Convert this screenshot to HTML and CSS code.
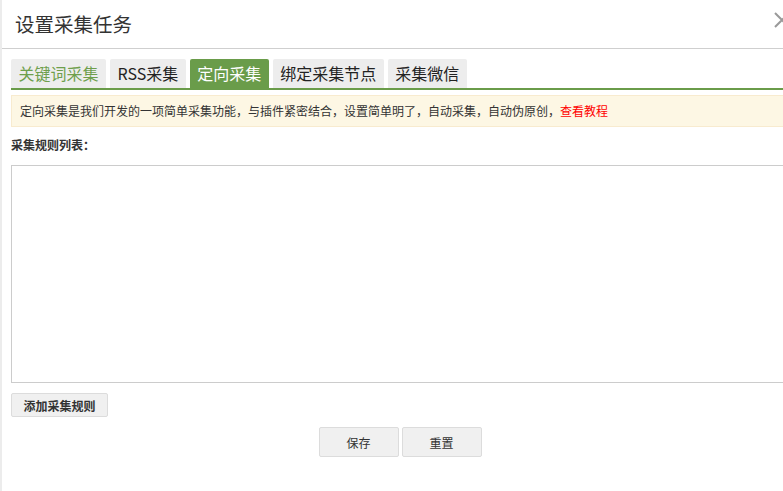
FILE: index.html
```html
<!DOCTYPE html>
<html lang="zh-CN">
<head>
<meta charset="utf-8">
<title>设置采集任务</title>
<link rel="stylesheet" href="styles.css">
</head>
<body>
<div class="dialog">
  <div class="header">
    <h1 class="title">设置采集任务</h1>
    <span class="close">
      <svg width="18" height="18" viewBox="0 0 18 18"><path d="M2 2 L16 16 M16 2 L2 16" stroke="#9a9a9a" stroke-width="2" fill="none"/></svg>
    </span>
  </div>
  <div class="content">
    <div class="tabs">
      <span class="tab tab-first">关键词采集</span>
      <span class="tab">RSS采集</span>
      <span class="tab active">定向采集</span>
      <span class="tab">绑定采集节点</span>
      <span class="tab">采集微信</span>
    </div>
    <div class="notice">定向采集是我们开发的一项简单采集功能，与插件紧密结合，设置简单明了，自动采集，自动伪原创，<a class="link" href="#">查看教程</a></div>
    <div class="label">采集规则列表：</div>
    <div class="rules"></div>
    <button class="btn btn-add">添加采集规则</button>
    <div class="footer">
      <button class="btn btn-main">保存</button>
      <button class="btn btn-main">重置</button>
    </div>
  </div>
</div>
</body>
</html>
```

FILE: styles.css
```css
html, body {
  margin: 0;
  padding: 0;
  overflow: hidden;
  background: #fff;
}
body {
  font-family: "Noto Sans CJK SC", "Noto Sans", sans-serif;
  color: #333;
}
.dialog {
  position: relative;
  width: 796px;
  height: 491px;
  border-left: 2px solid #ececec;
  background: #fff;
}
.header {
  height: 48px;
  border-bottom: 1px solid #cfcfcf;
  padding-left: 13px;
  display: flex;
  align-items: center;
}
.title {
  margin: 0;
  font-size: 19.5px;
  font-weight: normal;
  color: #333;
  line-height: 1;
}
.close {
  position: absolute;
  top: 11px;
  left: 771px;
  width: 18px;
  height: 18px;
}
.close svg { display: block; }
.content {
  padding: 0 9px;
}
.tabs {
  margin-top: 10px;
  display: flex;
  gap: 4px;
  border-bottom: 2px solid #6a9c4a;
}
.tab {
  height: 29px;
  line-height: 29px;
  padding: 0 7.5px;
  font-size: 16px;
  background: #ededed;
  color: #222;
  border-radius: 2px 2px 0 0;
}
.tab-first { color: #6e9f4c; }
.tab.active {
  background: #6a9c4a;
  color: #fff;
}
.notice {
  margin-top: 5px;
  height: 30px;
  line-height: 30px;
  padding-left: 8px;
  background: #fdf7e4;
  border: 1px solid #f8ebcf;
  font-size: 12px;
  color: #333;
  white-space: nowrap;
}
.link {
  color: #f00;
  text-decoration: none;
}
.label {
  margin-top: 9px;
  font-size: 12px;
  font-weight: bold;
  line-height: 18px;
  color: #333;
}
.rules {
  margin-top: 11px;
  height: 216px;
  border: 1px solid #cccccc;
  background: #fff;
}
.btn {
  font-family: "Noto Sans CJK SC", "Noto Sans", sans-serif;
  font-size: 12px;
  color: #333;
  background: #f0f0f0;
  border: 1px solid #dcdcdc;
  border-radius: 2px;
  padding: 0;
  cursor: pointer;
}
.btn-add {
  display: block;
  margin-top: 10px;
  width: 97px;
  height: 24px;
  font-weight: bold;
}
.footer {
  margin-top: 10px;
  display: flex;
  justify-content: center;
  gap: 3px;
}
.btn-main {
  width: 80px;
  height: 30px;
}
```
